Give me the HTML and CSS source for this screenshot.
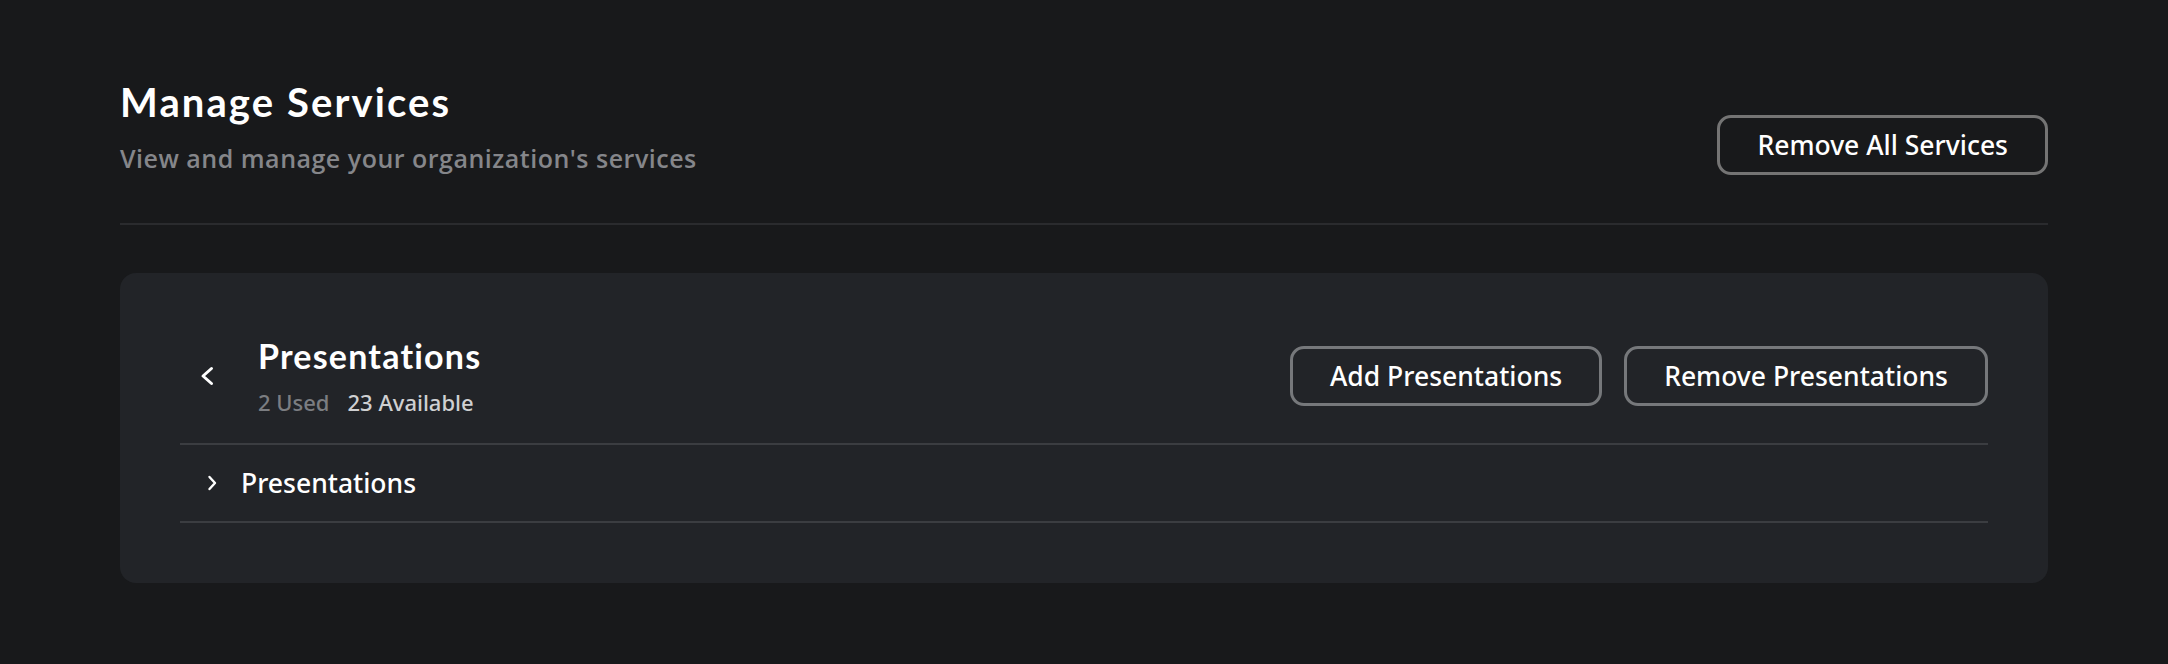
FILE: index.html
```html
<!DOCTYPE html>
<html lang="en">
<head>
<meta charset="utf-8">
<title>Manage Services</title>
<link rel="stylesheet" href="styles.css">
</head>
<body>
<main class="page">
  <header class="page-header">
    <div class="page-heading">
      <h1 class="page-title">Manage Services</h1>
      <p class="page-subtitle">View and manage your organization's services</p>
    </div>
    <button class="btn btn-dark" type="button">Remove All Services</button>
  </header>
  <hr class="divider">
  <section class="card">
    <div class="card-header">
      <div class="card-heading">
        <button class="back-btn" type="button" aria-label="Back">
          <svg width="14" height="20" viewBox="0 0 14 20"><polyline points="11.5,2.5 3,10 11.5,17.5" fill="none" stroke="#ffffff" stroke-width="3" stroke-linecap="round" stroke-linejoin="round"/></svg>
        </button>
        <div class="card-titles">
          <h2 class="card-title">Presentations</h2>
          <div class="stats">
            <span class="stat-used">2 Used</span>
            <span class="stat-available">23 Available</span>
          </div>
        </div>
      </div>
      <div class="card-actions">
        <button class="btn" type="button">Add Presentations</button>
        <button class="btn" type="button">Remove Presentations</button>
      </div>
    </div>
    <div class="list">
      <div class="list-row">
        <svg class="row-chevron" width="10" height="16" viewBox="0 0 10 16"><polyline points="2.5,2 8,8 2.5,14" fill="none" stroke="#ffffff" stroke-width="2.4" stroke-linecap="round" stroke-linejoin="round"/></svg>
        <span class="row-label">Presentations</span>
      </div>
    </div>
  </section>
</main>
</body>
</html>
```

FILE: styles.css
```css
* { box-sizing: border-box; }

html, body {
  margin: 0;
  padding: 0;
  background: #18191b;
}

body {
  font-family: "Open Sans", "Noto Sans", sans-serif;
  color: #ffffff;
}

.page {
  padding: 78px 120px 40px;
}

.page-header {
  display: flex;
  justify-content: space-between;
  align-items: flex-end;
}

.page-title {
  margin: 0;
  font-family: "Lato", "Open Sans", sans-serif;
  font-weight: 700;
  font-size: 40px;
  line-height: 48px;
  letter-spacing: 2.1px;
  color: #ffffff;
}

.page-subtitle {
  margin: 15px 0 0;
  font-size: 25px;
  line-height: 34px;
  font-weight: 600;
  letter-spacing: 0.5px;
  color: #85868a;
}

.divider {
  margin: 48px 0 0;
  border: 0;
  border-top: 2px solid #2a2b2e;
  height: 0;
}

.btn {
  height: 60px;
  padding: 0 37px;
  border: 3px solid #76787b;
  border-radius: 14px;
  background: transparent;
  color: #ffffff;
  font-family: "Noto Sans", "Open Sans", sans-serif;
  font-size: 26.5px;
  font-weight: 500;
  line-height: 1;
  cursor: pointer;
  white-space: nowrap;
}

.btn-dark {
  background: #18191b;
  border-color: #747474;
}

.card {
  margin-top: 48px;
  background: #222428;
  border-radius: 16px;
  padding: 63px 60px 60px;
}

.card-header {
  display: flex;
  justify-content: space-between;
  align-items: center;
  margin-bottom: 27px;
}

.card-heading {
  display: flex;
  align-items: center;
  gap: 24px;
}

.back-btn {
  display: flex;
  align-items: center;
  justify-content: flex-start;
  width: 54px;
  height: 40px;
  padding: 0 0 0 20px;
  border: 0;
  background: transparent;
  cursor: pointer;
}

.card-titles {
  display: flex;
  flex-direction: column;
}

.card-title {
  margin: 0;
  font-family: "Lato", "Open Sans", sans-serif;
  font-weight: 700;
  font-size: 34px;
  line-height: 40px;
  letter-spacing: 1.2px;
  color: #ffffff;
}

.stats {
  margin-top: 12px;
  display: flex;
  gap: 18px;
  font-family: "Noto Sans", "Open Sans", sans-serif;
  font-size: 22px;
  font-weight: 500;
  line-height: 28px;
}

.stat-used { color: #7b7d81; }
.stat-available { color: #cfd0d2; }

.card-actions {
  display: flex;
  gap: 22px;
}

.list {
  border-top: 2px solid #3b3d41;
  border-bottom: 2px solid #3b3d41;
}

.list-row {
  display: flex;
  align-items: center;
  height: 76px;
  padding-left: 27px;
  gap: 24px;
}

.row-label {
  font-family: "Noto Sans", "Open Sans", sans-serif;
  font-size: 26.5px;
  font-weight: 500;
  color: #ffffff;
}
```
